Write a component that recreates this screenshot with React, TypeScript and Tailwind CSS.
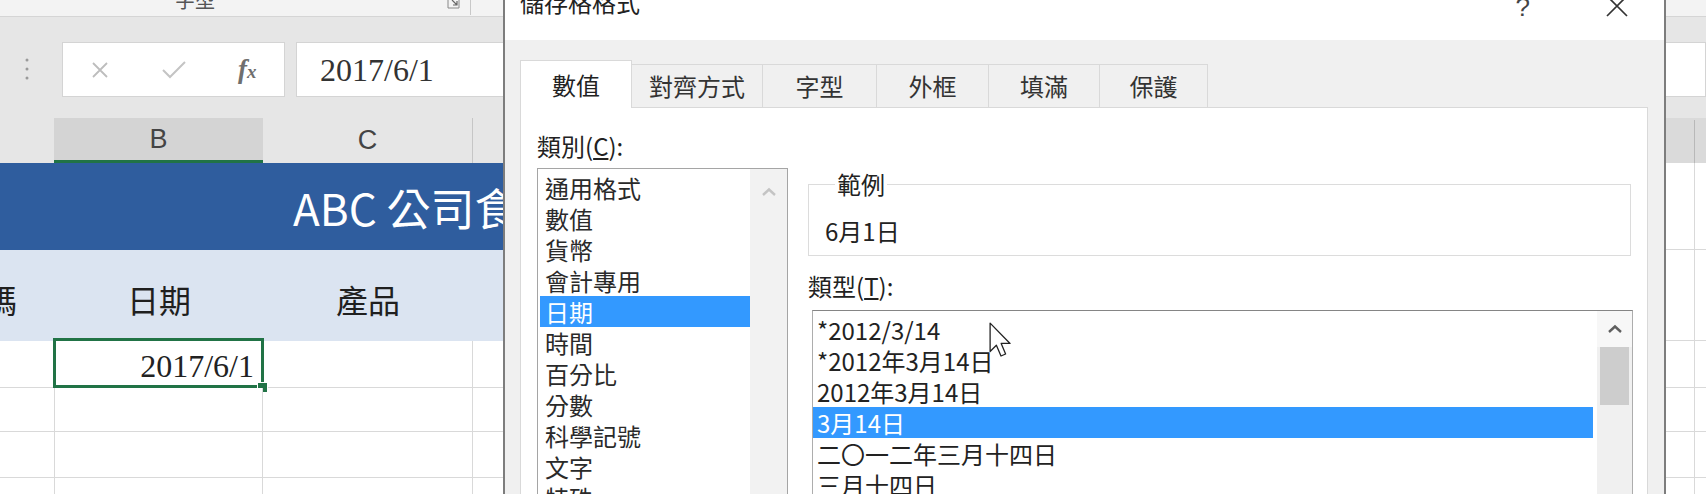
import React from "react";

const categories = ["通用格式", "數值", "貨幣", "會計專用", "日期", "時間", "百分比", "分數", "科學記號", "文字", "特殊", "自訂"];

const dateTypes = [
    "*2012/3/14",
    "*2012年3月14日",
    "2012年3月14日",
    "3月14日",
    "二〇一二年三月十四日",
    "三月十四日",
    "中華民國101年3月14日",
    "星期三",
];

const tabs = [
    { label: "對齊方式", width: "w-[131px]" },
    { label: "字型", width: "w-[114px]" },
    { label: "外框", width: "w-[112px]" },
    { label: "填滿", width: "w-[111px]" },
    { label: "保護", width: "w-[108px]" },
];

function Chevron({ color }: { color: string }) {
    return (
        <svg width="16" height="10" viewBox="0 0 16 10">
            <path d="M2 8 L8 2.5 L14 8" fill="none" stroke={color} strokeWidth="2.4" />
        </svg>
    );
}

function SheetRow({ height, children }: { height: string; children?: React.ReactNode }) {
    return (
        <div className={`flex ${height}`}>
            <div className="flex w-[1666px]">{children}</div>
            <div className="flex flex-1 border-b border-[#d9d9d9] bg-white">
                <div className="w-[29px] border-r border-[#d9d9d9]" />
            </div>
        </div>
    );
}

function Sheet() {
    return (
        <div className="flex w-[1706px] flex-col font-['Noto_Sans_CJK_TC',sans-serif]">
            {/* ribbon bottom edge */}
            <div className="flex h-[17px] shrink-0 items-end overflow-hidden border-b border-[#d5d5d5] bg-[#f3f3f3]">
                <span className="mb-[6px] ml-[175px] text-[20px] leading-[20px] text-[#555]">字型</span>
                <svg className="mb-[7px] ml-[232px]" width="13" height="11" viewBox="0 0 13 11">
                    <path d="M1 0 V10 H12 V0" fill="none" stroke="#888" strokeWidth="1" />
                    <path d="M5 2 L10 7 M10 3 V7 H6" fill="none" stroke="#666" strokeWidth="1.2" />
                </svg>
                <div className="ml-[10px] h-[15px] w-px self-start bg-[#c8c8c8]" />
            </div>

            {/* formula bar */}
            <div className="flex h-[101px] shrink-0 bg-[#e6e6e6] pt-[25px]">
                <svg className="ml-[25px]" width="4" height="55" viewBox="0 0 4 55">
                    <circle cx="2" cy="18" r="1.5" fill="#9a9a9a" />
                    <circle cx="2" cy="27" r="1.5" fill="#9a9a9a" />
                    <circle cx="2" cy="36" r="1.5" fill="#9a9a9a" />
                </svg>
                <div className="ml-[33px] flex h-[55px] w-[223px] border border-[#d4d4d4] bg-white">
                    <div className="flex flex-1 items-center justify-center">
                        <svg width="18" height="18" viewBox="0 0 18 18">
                            <path d="M2 2 L16 16 M16 2 L2 16" stroke="#bdbdbd" strokeWidth="1.8" />
                        </svg>
                    </div>
                    <div className="flex flex-1 items-center justify-center">
                        <svg width="26" height="20" viewBox="0 0 26 20">
                            <path d="M2 10 L9 17 L24 2" fill="none" stroke="#c4c4c4" strokeWidth="2" />
                        </svg>
                    </div>
                    <div className="flex flex-1 items-center justify-center">
                        <span className="font-['Liberation_Serif',serif] text-[27px] font-bold italic text-[#6f6f6f]">
                            f<span className="text-[19px]">x</span>
                        </span>
                    </div>
                </div>
                <div className="ml-[11px] flex h-[55px] flex-1 items-center border border-[#d4d4d4] bg-white pl-[23px] font-['Liberation_Serif',serif] text-[32px] text-[#333]">
                    2017/6/1
                </div>
            </div>

            {/* column headers */}
            <div className="flex h-[45px] shrink-0 bg-[#e6e6e6] font-['Liberation_Sans',sans-serif] text-[27px] text-[#444]">
                <div className="w-[54px]" />
                <div className="flex w-[209px] items-center justify-center border-b-[3px] border-[#217346] bg-[#d4d4d4]">B</div>
                <div className="flex w-[210px] items-center justify-center border-r border-[#c6c6c6]">C</div>
                <div className="w-[1193px]" />
                <div className="flex flex-1 bg-[#dadada]">
                    <div className="mt-[2px] w-[29px] border-r border-[#b8b8b8]" />
                </div>
            </div>

            {/* title */}
            <SheetRow height="h-[87px]">
                <div className="flex flex-1 items-center whitespace-nowrap bg-[#2f5d9e] pl-[293px] text-[44px] text-white">
                    ABC 公司食品銷售表
                </div>
            </SheetRow>

            {/* table header */}
            <SheetRow height="h-[91px]">
                <div className="flex flex-1 items-center bg-[#dbe4f1] pt-[6px] text-[32px] text-[#1f1f1f]">
                    <div className="flex w-[55px] justify-end overflow-hidden whitespace-nowrap pr-[38px]">編碼</div>
                    <div className="flex w-[208px] justify-center">日期</div>
                    <div className="flex w-[210px] justify-center">產品</div>
                    <div className="flex w-[210px] justify-center">數量</div>
                </div>
            </SheetRow>

            {/* data rows */}
            {["h-[47px]", "h-[44px]", "h-[46px]", "h-[45px]"].map((h, i) => (
                <SheetRow key={i} height={h}>
                    <div className="w-[55px] border-b border-r border-[#d9d9d9] bg-white" />
                    <div className="relative flex w-[208px] items-center justify-end border-b border-r border-[#d9d9d9] bg-white pr-[8px] pt-[4px] font-['Liberation_Serif',serif] text-[32px] text-[#222]">
                        {i === 0 && (
                            <>
                                2017/6/1
                                <div className="absolute -left-[2px] -right-[2px] -top-[3px] bottom-[-1px] border-[3px] border-[#217346]" />
                                <div className="absolute -bottom-[6px] -right-[6px] h-[11px] w-[11px] border border-white bg-[#217346]" />
                            </>
                        )}
                    </div>
                    <div className="w-[210px] border-b border-r border-[#d9d9d9] bg-white" />
                    <div className="flex-1 border-b border-[#d9d9d9] bg-white" />
                </SheetRow>
            ))}
        </div>
    );
}

function FormatDialog() {
    return (
        <div className="absolute left-[503px] top-0 flex w-[1163px] flex-col border-x-2 border-[#7d7d7d] bg-[#f0f0f0] font-['Noto_Sans_CJK_TC',sans-serif] text-[#222]">
            {/* title bar */}
            <div className="flex h-[40px] shrink-0 overflow-hidden bg-white">
                <span className="-mt-[10px] ml-[15px] text-[24px] leading-[24px]">儲存格格式</span>
                <span className="-mt-[6px] ml-auto font-['Liberation_Sans',sans-serif] text-[26px] leading-[26px] text-[#444]">?</span>
                <svg className="-mt-[5px] ml-[76px] mr-[36px]" width="22" height="22" viewBox="0 0 22 22">
                    <path d="M1 1 L21 21 M21 1 L1 21" stroke="#333" strokeWidth="1.7" />
                </svg>
            </div>

            <div className="flex flex-col pl-[15px] pr-[16px] pt-[20px]">
                {/* tabs */}
                <div className="flex h-[47px] shrink-0 items-end text-[24px]">
                    <div className="relative z-10 -mb-px flex h-[48px] w-[112px] items-center justify-center border border-b-0 border-[#d9d9d9] bg-white">
                        數值
                    </div>
                    {tabs.map((t) => (
                        <div
                            key={t.label}
                            className={`flex h-[43px] ${t.width} items-center justify-center border-r border-t border-[#d9d9d9] text-[#333]`}
                        >
                            {t.label}
                        </div>
                    ))}
                </div>

                {/* pane */}
                <div className="flex border border-[#d9d9d9] bg-white pl-[16px] pr-[14px] pt-[22px] text-[24px]">
                    <div className="flex w-[251px] flex-col">
                        <div className="leading-[31px]">
                            類別(<span className="underline">C</span>):
                        </div>
                        <div className="mt-[7px] flex h-[340px] border border-[#a5a5a5]">
                            <div className="flex w-[212px] flex-col pl-[2px] pt-[3px] leading-[31px]">
                                {categories.map((c) => (
                                    <div
                                        key={c}
                                        className={c === "日期" ? "bg-[#3399ff] px-[5px] text-white" : "px-[5px] text-[#2a2a2a]"}
                                    >
                                        {c}
                                    </div>
                                ))}
                            </div>
                            <div className="flex flex-1 justify-center bg-[#f2f2f2] pt-[18px]">
                                <Chevron color="#c4c4c4" />
                            </div>
                        </div>
                    </div>

                    <div className="ml-[20px] flex flex-1 flex-col">
                        <fieldset className="mr-[2px] mt-[42px] border border-[#dcdcdc] pb-[9px] pl-[16px]">
                            <legend className="ml-[10px] px-[2px] leading-[24px]">範例</legend>
                            <div className="mt-[19px] leading-[31px]">6月1日</div>
                        </fieldset>
                        <div className="mt-[14px] leading-[31px]">
                            類型(<span className="underline">T</span>):
                        </div>
                        <div className="ml-[4px] mt-[9px] flex h-[300px] border border-[#adadad] border-t-[#858585]">
                            <div className="flex w-[780px] flex-col pt-[3px] leading-[31px]">
                                {dateTypes.map((d) => (
                                    <div
                                        key={d}
                                        className={d === "3月14日" ? "bg-[#3399ff] pl-[4px] text-white" : "pl-[4px] text-[#222]"}
                                    >
                                        {d}
                                    </div>
                                ))}
                            </div>
                            <div className="ml-[4px] flex flex-1 flex-col items-center bg-[#f0f0f0]">
                                <div className="flex h-[36px] w-full items-center justify-center bg-[#f7f7f7]">
                                    <Chevron color="#5f5f5f" />
                                </div>
                                <div className="h-[58px] w-[29px] bg-[#cdcdcd]" />
                            </div>
                        </div>
                    </div>
                </div>
            </div>
        </div>
    );
}

export default function App() {
    return (
        <div className="relative h-[494px] w-[1706px] overflow-hidden bg-white">
            <Sheet />
            <FormatDialog />
            <svg className="absolute left-[989px] top-[322px]" width="24" height="37" viewBox="0 0 13 20">
                <path
                    d="M0.6 0.6 L0.6 16 L4 12.6 L6.5 18.4 L9 17.3 L6.6 11.6 L11.4 11.6 Z"
                    fill="white"
                    stroke="#222"
                    strokeWidth="0.7"
                    strokeLinejoin="round"
                />
            </svg>
        </div>
    );
}
